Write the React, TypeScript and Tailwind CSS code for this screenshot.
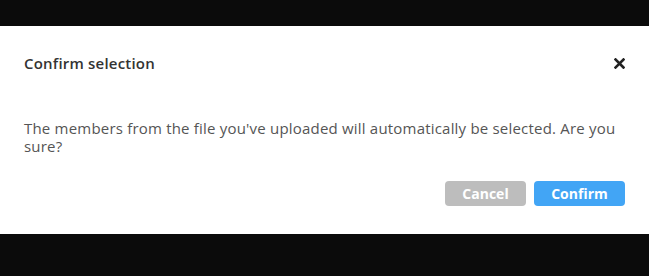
export default function App() {
  return (
    <div className="h-[276px] w-full bg-[#0b0b0b] pt-[26px]" style={{ fontFamily: '"Open Sans", "Liberation Sans", sans-serif' }}>
      <div className="flex h-[208px] flex-col bg-white px-6">
        <div className="flex items-center justify-between pt-[27px]">
          <h2 className="text-[15px] leading-5 font-semibold tracking-[0.2px] text-[#333]">Confirm selection</h2>
          <button className="text-[#222]">
            <svg width="11" height="11" viewBox="0 0 11 11" fill="none" stroke="currentColor" strokeWidth="2.6" strokeLinecap="square">
              <path d="M1.5 1.5l8 8M9.5 1.5l-8 8" />
            </svg>
          </button>
        </div>
        <p className="mt-[46px] text-[15px] leading-[18px] tracking-[0.2px] text-[#555]">
          The members from the file you've uploaded will automatically be selected. Are you sure?
        </p>
        <div className="mt-[26px] flex justify-end gap-2">
          <button className="h-[25px] w-[81px] rounded bg-[#bdbdbd] text-[14px] font-bold text-white">Cancel</button>
          <button className="h-[25px] w-[91px] rounded bg-[#42a5f5] text-[14px] font-bold text-white">Confirm</button>
        </div>
      </div>
    </div>
  )
}
